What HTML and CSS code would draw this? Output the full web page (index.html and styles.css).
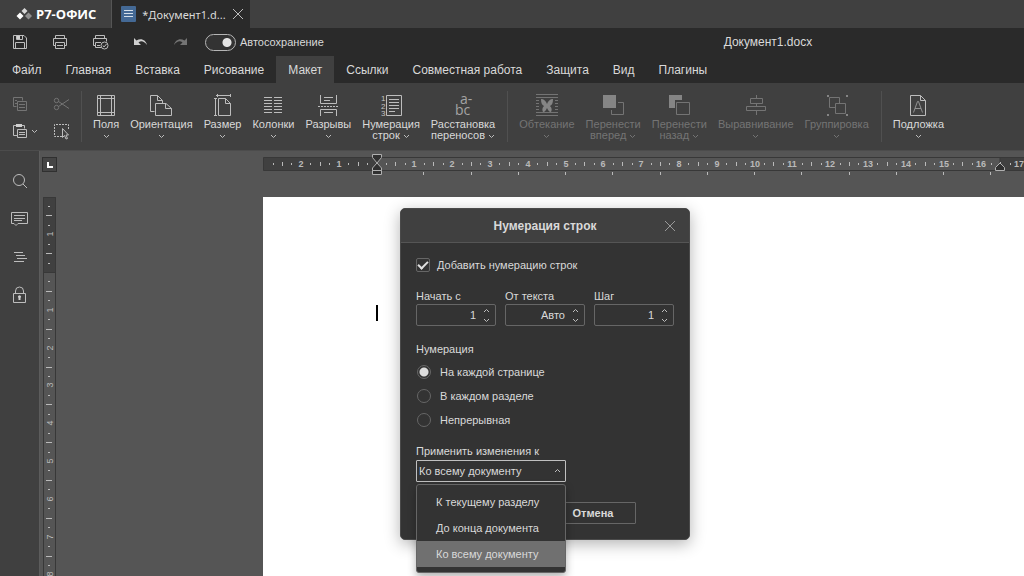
FILE: index.html
```html
<!DOCTYPE html>
<html lang="ru">
<head>
<meta charset="utf-8">
<title>Документ1.docx</title>
<link rel="stylesheet" href="styles.css">
</head>
<body>
<svg class="sprite" aria-hidden="true">
  <symbol id="chev" viewBox="0 0 7 5"><path d="M1 1l2.500 2.500L6 1"/></symbol>
  <symbol id="chev-up" viewBox="0 0 7 5"><path d="M1 4l2.500-2.500L6 4"/></symbol>
</svg>

<div class="app">
  <header class="titlebar">
    <div class="brand">
      <svg width="17" height="14" viewBox="0 0 17 14"><path fill="#d8d8d8" d="M8.500 1l3 3-3 3-3-3z"/><path fill="#fff" d="M4 5.500l3.500 3.500L4 12.500.5 9z"/><path fill="#8f8f8f" d="M12.500 5.500L16 9l-3.500 3.500L9 9z"/></svg>
      <span>Р7-ОФИС</span>
    </div>
    <div class="doc-tab">
      <svg width="15" height="16" viewBox="0 0 15 16"><rect width="15" height="16" rx="1" fill="#446995"/><path stroke="#d5dfea" d="M3 4.500h9M3 7.500h9M3 10.500h9"/></svg>
      <span class="doc-name">*Документ1.d...</span>
      <button class="plain" aria-label="Закрыть вкладку"><svg class="ico" width="12" height="12"><path d="M1 1l10 10M11 1L1 11"/></svg></button>
    </div>
  </header>

  <div class="quickbar">
    <button class="plain" aria-label="Сохранить"><svg class="ico" width="16" height="16"><path d="M1.500 1.500h10.500l2.500 2.500v10.500h-13zM4.500 1.500v4h6v-4M3.500 14v-5.500h9V14"/><path class="fill" d="M5 2h3v3H5z"/></svg></button>
    <button class="plain" aria-label="Печать"><svg class="ico" width="16" height="16"><path d="M3.500 4.500v-3h9v3M3.500 11.500h-2v-7h13v7h-2M3.500 8.500h9v6h-9zM5 11.500h6"/></svg></button>
    <button class="plain" aria-label="Быстрая печать"><svg class="ico" width="18" height="16"><path d="M3.500 4.500v-3h9v3M3.500 11.500h-2v-7h13v3M9 8.500H3.500v5H9M5 11.500h3"/><circle cx="12.500" cy="11.500" r="3.500"/><path d="M11 11.500l1 1.500 2.500-3"/></svg></button>
    <button class="plain undo" aria-label="Отменить"><svg width="16" height="12"><path fill="#d0d0d0" d="M2 2v7h7L6.500 6.500C9 4.500 12 5 15 9 14 4 9 1.500 4.500 4.500z"/></svg></button>
    <button class="plain redo" aria-label="Повторить"><svg width="16" height="12"><path fill="#747474" d="M15 2v7H8l2.500-2.500C8 4.500 5 5 2 9 3 4 8 1.500 12.500 4.500z"/></svg></button>
    <label class="switch"><input type="checkbox" checked>Автосохранение</label>
    <span class="doc-title">Документ1.docx</span>
  </div>

  <nav class="tabs">
    <a href="#file">Файл</a><a href="#home">Главная</a><a href="#insert">Вставка</a><a href="#draw">Рисование</a><a href="#layout" class="active">Макет</a><a href="#refs">Ссылки</a><a href="#collab">Совместная работа</a><a href="#protect">Защита</a><a href="#view">Вид</a><a href="#plugins">Плагины</a>
  </nav>

  <div class="toolbar">
    <div class="clip">
      <button class="plain off" aria-label="Копировать"><svg class="ico" width="16" height="16"><path d="M4.500 9.500h-3v-9h9v3M3 3.500h2M3 6.500h2M5.500 4.500h9v9h-9zM7 7.500h6M7 10.500h6"/></svg></button>
      <button class="plain off" aria-label="Вырезать"><svg class="ico" width="17" height="16"><circle cx="3.500" cy="3.500" r="2.200"/><circle cx="3.500" cy="10.500" r="2.200"/><path d="M5.500 4.500L16 11.500M5.500 9.500L16 2.500"/></svg></button>
      <button class="plain" aria-label="Вставить"><svg class="ico" width="16" height="16"><path d="M5.500 11.500h-4v-10h11v3M5.500 5.500h9v8h-9zM7 8.500h6M7 10.500h6"/><path class="fill" d="M4 0h6v3H4z"/></svg><svg class="ico chev"><use href="#chev"/></svg></button>
      <button class="plain" aria-label="Выделить"><svg class="ico" width="17" height="17"><path stroke-dasharray="2 1" d="M9 13.500H1.500v-12h14V7"/><path d="M9.500 5.500v9l2-2 1.500 3.500 1.500-.5-1.500-3.500h2.500z"/></svg></button>
    </div>
    <div class="group">
      <button class="tool"><svg class="ico" width="24" height="24"><path d="M3.500 1.500h17v20h-17zM6.500 1.500v20M17.500 1.500v20M3.500 4.500h17M3.500 18.500h17"/></svg><span>Поля<br><svg class="ico chev"><use href="#chev"/></svg></span></button>
      <button class="tool"><svg class="ico" width="24" height="24"><path d="M5.500 17.500h-4v-16h7l5 5V9M8.500 1.500v5h5M6.500 9.500H17l5.500 5v7h-16zM16.500 9.500v5h6"/></svg><span>Ориентация<br><svg class="ico chev"><use href="#chev"/></svg></span></button>
      <button class="tool"><svg class="ico" width="24" height="24"><path d="M7.500 4.500h7l5 5v12h-12zM14.500 4.500v5h5M5 1.500h14M6.500 0v3M19.500 0v3M4.500 4v18M3 4.500h3M3 21.500h3"/></svg><span>Размер<br><svg class="ico chev"><use href="#chev"/></svg></span></button>
      <button class="tool"><svg class="ico" width="24" height="24"><path d="M3 3.500h8m2 0h8M3 6.500h8m2 0h8M3 9.500h8m2 0h8M3 12.500h8m2 0h8M3 15.500h8m2 0h8M3 18.500h8m2 0h8"/></svg><span>Колонки<br><svg class="ico chev"><use href="#chev"/></svg></span></button>
      <button class="tool"><svg class="ico" width="24" height="24"><path d="M4.500 1v8.500h16V1M8 3.500h9M8 6.500h6M4.500 22v-6.500h16V22M8 18.500h9"/><path stroke-dasharray="2 1" d="M2 12.500h21"/></svg><span>Разрывы<br><svg class="ico chev"><use href="#chev"/></svg></span></button>
      <button class="tool"><svg class="ico" width="24" height="24"><path d="M7.500 1.500h15v20h-15zM10 5.500h10M10 8.500h10M10 11.500h10M10 14.500h10M10 17.500h6"/><g class="digits"><text x="2" y="7">1</text><text x="2" y="15">2</text><text x="2" y="22">3</text></g></svg><span>Нумерация<br>строк <svg class="ico chev"><use href="#chev"/></svg></span></button>
      <button class="tool"><svg class="ico spill" width="24" height="24"><g class="letters"><text x="9" y="10">a-</text><text x="4" y="21">bc</text></g></svg><span>Расстановка<br>переносов <svg class="ico chev"><use href="#chev"/></svg></span></button>
    </div>
    <div class="group">
      <button class="tool off"><svg class="ico" width="24" height="24"><path d="M1 .5h22M1 3.500h22M1 6.500h3m16 0h3M1 9.500h3m16 0h3M1 12.500h3m16 0h3M1 15.500h3m16 0h3M1 18.500h22M1 21.500h22"/><path class="fill" d="M6 5c3 0 5 2 6 5 1-3 3-5 6-5 0 4-1 6-3 7 2 2 2 4 1 6-2 0-3-2-4-4-1 2-2 4-4 4-1-2-1-4 1-6-2-1-3-3-3-7z"/></svg><span>Обтекание<br><svg class="ico chev"><use href="#chev"/></svg></span></button>
      <button class="tool off"><svg class="ico" width="24" height="24"><path d="M17 8.500h5.500v12h-12V16"/><path class="fill" d="M2 1h13v13H2z"/></svg><span>Перенести<br>вперед <svg class="ico chev"><use href="#chev"/></svg></span></button>
      <button class="tool off"><svg class="ico" width="24" height="24"><path class="fill" d="M2 1h13v5H8v8H2z"/><path d="M9.500 8.500h13v12h-13z"/></svg><span>Перенести<br>назад <svg class="ico chev"><use href="#chev"/></svg></span></button>
      <button class="tool off"><svg class="ico" width="24" height="24"><path d="M12.500 1v3M12.500 9v3M12.500 17v4M6.500 4.500h12v5h-12zM2.500 12.500h19v4h-19z"/></svg><span>Выравнивание<br><svg class="ico chev"><use href="#chev"/></svg></span></button>
      <button class="tool off"><svg class="ico" width="24" height="24"><path d="M10 13.500H4.500v-10h10V9M10.500 9.500h10v10h-10z"/><path class="fill" d="M2 1h2v2H2zM21 1h2v2h-2zM2 20h2v2H2zM21 20h2v2h-2z"/></svg><span>Группировка<br><svg class="ico chev"><use href="#chev"/></svg></span></button>
    </div>
    <div class="group">
      <button class="tool"><svg class="ico" width="24" height="24"><path d="M4.500 1.500h10l5 5v15h-15zM14.500 1.500v5h5"/><path class="dim" d="M7.500 18.500l4-11h1l4 11M9 14.500h6"/></svg><span>Подложка<br><svg class="ico chev"><use href="#chev"/></svg></span></button>
    </div>
  </div>

  <div class="workspace">
    <aside class="side">
      <button class="plain" aria-label="Поиск"><svg class="ico" width="16" height="16"><circle cx="7" cy="7" r="5.500"/><path d="M11 11l4 4"/></svg></button>
      <button class="plain" aria-label="Комментарии"><svg class="ico" width="17" height="16"><path d="M.5 1.500h16v11H7l-2 2-2-2H.5zM3 4.500h11M3 7.500h11M3 9.500h8"/></svg></button>
      <button class="plain" aria-label="Заголовки"><svg class="ico" width="16" height="14"><path d="M2 2.500h9M4 5.500h9M5 8.500h10M2 11.500h10"/></svg></button>
      <button class="plain" aria-label="Защита"><svg class="ico" width="16" height="18"><path d="M1.500 7.500h12v9h-12zM3.500 7V5a4 4 0 0 1 8 0v2"/><path class="fill" d="M6.500 14v-2a1.500 1.500 0 1 1 2 0v2z"/></svg></button>
    </aside>
    <main class="canvas">
      <div class="ruler-row">
        <button class="tabstop" aria-label="Позиция табуляции"><svg width="6" height="6"><path fill="#fff" d="M0 0h2v4h4v2H0z"/></svg></button>
        <svg class="hruler" id="hruler"></svg>
      </div>
      <div class="doc-row">
        <svg class="vruler" id="vruler"></svg>
        <article class="page"><div class="caret"></div></article>
      </div>
    </main>
  </div>
</div>

<section class="dialog" role="dialog" aria-labelledby="dlg-title">
  <header class="dialog-head">
    <h1 id="dlg-title">Нумерация строк</h1>
    <button class="plain dialog-close" aria-label="Закрыть"><svg class="ico" width="12" height="12"><path d="M1 1l10 10M11 1L1 11"/></svg></button>
  </header>
  <form class="dialog-body">
    <label class="check"><input type="checkbox" checked>Добавить нумерацию строк</label>
    <div class="spins">
      <div class="field"><label for="start">Начать с</label><div class="spin"><input id="start" value="1"><div class="steps"><button type="button" aria-label="Больше"><svg class="ico chev"><use href="#chev-up"/></svg></button><button type="button" aria-label="Меньше"><svg class="ico chev"><use href="#chev"/></svg></button></div></div></div>
      <div class="field"><label for="dist">От текста</label><div class="spin"><input id="dist" value="Авто"><div class="steps"><button type="button" aria-label="Больше"><svg class="ico chev"><use href="#chev-up"/></svg></button><button type="button" aria-label="Меньше"><svg class="ico chev"><use href="#chev"/></svg></button></div></div></div>
      <div class="field"><label for="step">Шаг</label><div class="spin"><input id="step" value="1"><div class="steps"><button type="button" aria-label="Больше"><svg class="ico chev"><use href="#chev-up"/></svg></button><button type="button" aria-label="Меньше"><svg class="ico chev"><use href="#chev"/></svg></button></div></div></div>
    </div>
    <fieldset class="radios">
      <legend>Нумерация</legend>
      <label><input type="radio" name="mode" checked>На каждой странице</label>
      <label><input type="radio" name="mode">В каждом разделе</label>
      <label><input type="radio" name="mode">Непрерывная</label>
    </fieldset>
    <div class="field apply">
      <label for="apply">Применить изменения к</label>
      <div class="combo">
        <select id="apply"><option>Ко всему документу</option></select>
        <svg class="ico chev"><use href="#chev-up"/></svg>
        <ul class="menu" role="listbox" aria-label="Применить изменения к">
          <li role="option" aria-selected="false">К текущему разделу</li>
          <li role="option" aria-selected="false">До конца документа</li>
          <li role="option" aria-selected="true">Ко всему документу</li>
        </ul>
      </div>
    </div>
    <div class="actions"><button type="button" class="ok" aria-label="Применить"></button><button type="button">Отмена</button></div>
  </form>
</section>
<script src="rulers.js"></script>
</body>
</html>
```
FILE: rulers.js
```js
const NS = 'http://www.w3.org/2000/svg';
const CM = 37.8;

function add(parent, tag, attrs, text) {
  const el = document.createElementNS(NS, tag);
  for (const key in attrs) el.setAttribute(key, attrs[key]);
  if (text !== undefined) el.textContent = text;
  parent.appendChild(el);
}

/* Draws quarter and half ticks with a number at each whole centimetre. */
function scale(svg, zero, from, to, vertical) {
  for (let q = from * 4; q <= to * 4; q++) {
    if (q === 0) continue;
    const pos = Math.round(zero + q * CM / 4);
    if (q % 4 === 0) {
      const at = vertical
        ? { transform: `translate(10 ${pos}) rotate(-90)` }
        : { x: pos, y: 10 };
      add(svg, 'text', at, Math.abs(q / 4));
    } else {
      const len = vertical ? (q % 2 === 0 ? 6 : 2) : (q % 2 === 0 ? 4 : 2);
      const start = 7 - len / 2;
      add(svg, 'rect', vertical
        ? { x: start - 1, y: pos, width: len, height: 1 }
        : { x: pos, y: start, width: 1, height: len });
    }
  }
}

const h = document.getElementById('hruler');
const left = 114, right = 737;
add(h, 'path', { class: 'band dark', d: 'M.5 .5H2000V13.500H.5z' });
add(h, 'path', { class: 'band', d: `M${left} .5H${right}V13.500H${left}z` });
scale(h, 113.5, -2.75, 17, false);
for (let i = 1; i <= 13; i++) {
  add(h, 'rect', { x: Math.round(113 + i * CM * 1.25), y: 15, width: 1, height: 3 });
}
add(h, 'path', { class: 'marker', d: `M${left - 4.5} -2.500h9v3l-4.500 5.500l-4.500-5.500zM${left - 4.5} 13.500v-2.500l4.500-5l4.500 5v2.500zM${left - 4.5} 13.500h9v4h-9z` });
add(h, 'path', { class: 'marker', d: `M${right - 4.5} 13.500v-3l4.500-4.500l4.500 4.500v3z` });

const v = document.getElementById('vruler');
add(v, 'path', { class: 'band', d: 'M.5 .5H12.500V2000H.5z' });
add(v, 'path', { class: 'band dark', d: 'M.5 .5H12.500V75.500H.5z' });
scale(v, 75, -1.75, 10, true);
```
FILE: styles.css
```css
* { box-sizing: border-box; }
html, body { height: 100%; margin: 0; overflow: hidden; }
body, button, input, select {
  font-family: "Liberation Sans", Arial, sans-serif;
  font-size: 11px;
  color: #d9d9d9;
}
button { padding: 0; border: 0; background: none; }
.sprite { position: absolute; width: 0; height: 0; }
.plain { display: inline-flex; align-items: center; }
.ico { fill: none; stroke: #bdbdbd; stroke-width: 1; flex: none; }
.ico .fill { fill: #d0d0d0; stroke: none; }
.ico .dim { stroke: #929292; }
.chev { width: 7px; height: 5px; }
.spill { overflow: visible; }
.off { color: #747474; }
.off .ico { stroke: #747474; }
.off .fill { fill: #858585; }

.app { display: flex; flex-direction: column; height: 100%; background: #2a2a2a; }
.titlebar { display: flex; height: 28px; flex: none; background: #404040; }
.brand {
  display: flex; align-items: center; gap: 3px;
  padding: 0 15px 0 16px;
  border-right: 1px solid #555;
  font: bold 13px "Open Sans", sans-serif; color: #fff;
}
.doc-tab { display: flex; align-items: center; gap: 6px; padding: 0 6px 0 9px; background: #2a2a2a; }
.doc-name { font: 11px "Noto Sans", sans-serif; }

.quickbar { display: flex; align-items: center; height: 28px; flex: none; padding-left: 12px; }
.quickbar .plain { width: 40px; }
.quickbar .redo { width: 33px; }
.switch { display: flex; align-items: center; gap: 4px; }
.switch input {
  appearance: none; width: 31px; height: 17px; margin: 0;
  border: 1px solid #b5b5b5; border-radius: 9px;
  background: radial-gradient(circle at 21px 50%, #e4e4e4 4px, transparent 5px) #333;
}
.doc-title { margin: 0 auto; padding-left: 188px; font-size: 12px; }

.tabs { display: flex; height: 27px; flex: none; font-size: 12px; }
.tabs a { display: flex; align-items: center; padding: 0 12px; color: #d9d9d9; text-decoration: none; }
.tabs .active { background: #404040; }

.toolbar { display: flex; height: 68px; flex: none; background: #404040; border-bottom: 1px solid #4c4c4c; padding-top: 8px; }
.clip { display: grid; grid-template-columns: 41px 28px; grid-auto-rows: 27px; align-content: start; padding-left: 12px; width: 81px; }
.clip .plain { gap: 3px; }
.group { display: flex; align-items: flex-start; gap: 11px; height: 51px; padding: 3px 12px 3px 11px; border-left: 1px solid #505050; }
.tool { display: flex; flex-direction: column; align-items: center; gap: 1px; line-height: 11px; white-space: nowrap; }
.tool span { text-align: center; }
.digits { font-size: 8px; fill: #c4c4c4; stroke: none; }
.letters { font: 14px "Open Sans", sans-serif; fill: #a4a4a4; stroke: none; }

.workspace { display: flex; flex: 1; min-height: 0; background: #555; }
.side { display: flex; flex-direction: column; align-items: center; width: 40px; padding-top: 11px; background: #404040; border-right: 1px solid #5c5c5c; }
.side .plain { height: 38px; }
.canvas { display: flex; flex-direction: column; flex: 1; min-width: 0; padding-left: 2px; }
.ruler-row { display: flex; height: 46px; flex: none; padding-top: 6px; }
.tabstop { display: flex; align-items: center; justify-content: center; width: 15px; height: 15px; margin-right: 206px; border: 1px solid #303030; background: #454545; flex: none; }
.hruler { flex: 1; min-width: 0; height: 20px; overflow: visible; }
.doc-row { display: flex; flex: 1; min-height: 0; padding-left: 1px; }
.vruler { width: 14px; height: 100%; margin-right: 206px; flex: none; }
.hruler, .vruler { font-size: 9px; fill: #bababa; text-anchor: middle; }
.hruler { font-weight: bold; }
.band { fill: #555; stroke: #383838; }
.band.dark { fill: #404040; }
.marker { fill: #303030; stroke: #b0b0b0; }
.page { flex: 1; background: #fff; padding: 108px 113px; }
.caret { width: 2px; height: 16px; background: #000; }

.dialog {
  position: absolute; left: 400px; top: 208px; width: 290px;
  border: 1px solid #4a4a4a; border-radius: 5px;
  background: #333; box-shadow: 0 4px 16px rgba(0, 0, 0, .3);
}
.dialog-head { display: flex; align-items: center; height: 34px; padding: 0 13px 0 25px; background: #404040; border-bottom: 1px solid #555; border-radius: 4px 4px 0 0; }
.dialog-head h1 { flex: 1; margin: 0; font-size: 12px; text-align: center; }
.dialog-close .ico { stroke: #999; }
.dialog-body { display: flex; flex-direction: column; padding: 15px; line-height: 14px; }
.check, .radios label { display: flex; align-items: center; }
.check { gap: 7px; }
.check input, .radios input { appearance: none; width: 14px; height: 14px; margin: 0; border: 1px solid #666; }
.check input { border-radius: 2px; display: grid; place-items: center; }
.check input::after { content: ""; width: 8px; height: 4px; border: solid #e0e0e0; border-width: 0 0 2px 2px; transform: translateY(-1px) rotate(-45deg); }
.spins { display: flex; gap: 9px; margin-top: 17px; }
.field { display: flex; flex-direction: column; gap: 1px; }
.spins .field { flex: 1; }
.spin { display: flex; height: 22px; border: 1px solid #666; border-radius: 2px; }
.spin input { flex: 1; min-width: 0; width: 0; padding: 0 2px 0 4px; border: 0; background: none; text-align: right; outline: 0; }
.steps { display: flex; flex-direction: column; width: 17px; }
.steps button { display: flex; flex: 1; align-items: center; justify-content: center; }
.radios { display: flex; flex-direction: column; margin: 16px 0 0; padding: 0; border: 0; }
.radios legend { padding: 0; margin-bottom: 4px; }
.radios label { gap: 9px; height: 24px; padding-left: 1px; }
.radios input { border-radius: 7px; }
.radios input:checked { background: radial-gradient(circle, #ddd 4px, transparent 5px); }
.apply { margin-top: 12px; width: 150px; gap: 2px; }
.combo { position: relative; display: flex; }
.combo select { appearance: none; width: 100%; height: 22px; padding: 0 2px; border: 1px solid #c0c0c0; border-radius: 1px; background: #333; outline: 0; }
.combo > .chev { position: absolute; right: 5px; top: 8px; }
.menu {
  position: absolute; left: 0; right: 0; top: 24px; margin: 0; padding: 4px 0 5px;
  border: 1px solid #666; border-radius: 3px; background: #333;
  list-style: none; box-shadow: 0 4px 8px rgba(0, 0, 0, .3);
}
.menu li { padding: 0 19px; line-height: 26px; white-space: nowrap; }
.menu [aria-selected="true"] { background: #707070; }
.actions { display: flex; justify-content: center; gap: 10px; margin-top: 20px; }
.actions button { width: 86px; height: 22px; border: 1px solid #666; border-radius: 1px; font-weight: bold; }
```
